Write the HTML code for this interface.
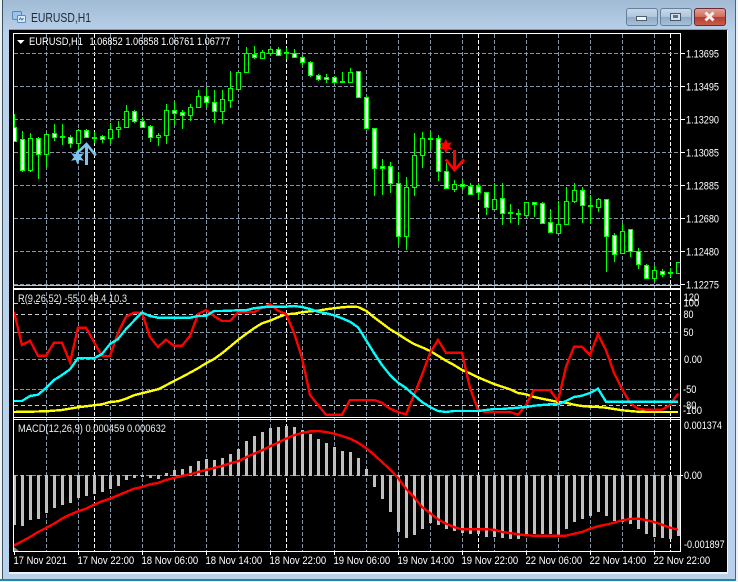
<!DOCTYPE html>
<html><head><meta charset="utf-8"><title>EURUSD,H1</title>
<style>
html,body{margin:0;padding:0;background:#e9eef3;width:738px;height:582px;overflow:hidden}
svg{display:block}
text{font-family:"Liberation Sans",Arial,sans-serif;font-size:11px;fill:#fff}
.c{shape-rendering:crispEdges}
</style></head><body>
<svg width="738" height="582" viewBox="0 0 738 582" xmlns="http://www.w3.org/2000/svg">
<defs>
<linearGradient id="tb" x1="0" y1="0" x2="0" y2="1"><stop offset="0" stop-color="#a2bbd5"/><stop offset=".06" stop-color="#bad2ea"/><stop offset="1" stop-color="#b9d1ea"/></linearGradient>
<linearGradient id="bt" x1="0" y1="0" x2="0" y2="1"><stop offset="0" stop-color="#c9d9e9"/><stop offset=".48" stop-color="#b1c7dd"/><stop offset=".52" stop-color="#8fabc7"/><stop offset="1" stop-color="#a9c2da"/></linearGradient>
<linearGradient id="cl" x1="0" y1="0" x2="0" y2="1"><stop offset="0" stop-color="#e2a294"/><stop offset=".48" stop-color="#cf6f60"/><stop offset=".52" stop-color="#b43c2e"/><stop offset="1" stop-color="#c7604e"/></linearGradient>
<clipPath id="cm"><rect x="14" y="34" width="666" height="252"/></clipPath>
<clipPath id="cr"><rect x="14" y="290" width="666" height="127"/></clipPath>
<clipPath id="cd"><rect x="14" y="420" width="667" height="131"/></clipPath>
</defs>
<!-- window frame -->
<rect x="0" y="0" width="738" height="582" fill="#eef2f6"/>
<rect x="3" y="0" width="732" height="580" fill="url(#tb)"/>
<rect x="2" y="0" width="1" height="580" fill="#39505e"/>
<rect x="735" y="0" width="1" height="580" fill="#3f6b7c"/>
<rect x="0" y="579" width="736" height="2" fill="#1f8ba3"/>
<!-- title -->
<g>
<rect x="12.5" y="11.5" width="9" height="8" rx="1" fill="#9cc4ea" stroke="#5c86b4"/>
<rect x="17.5" y="15.5" width="8" height="7" rx="1" fill="#dcebf9" stroke="#5a8cc0"/>
<path d="M19 20l1.5-2 1.5 2 1.5-2" fill="none" stroke="#3a6ea8"/>
</g>
<text x="31" y="22" textLength="60" lengthAdjust="spacingAndGlyphs" style="font-size:12.5px;fill:#1f2a33">EURUSD,H1</text>
<!-- buttons -->
<rect x="626.5" y="8.5" width="31" height="17" rx="2.5" fill="url(#bt)" stroke="#66809b"/>
<rect x="636.5" y="16.5" width="10" height="4" fill="#f1f5f8" stroke="#4c5e70"/>
<rect x="660.5" y="8.5" width="31" height="17" rx="2.5" fill="url(#bt)" stroke="#66809b"/>
<rect x="670.5" y="13.5" width="10" height="7" fill="#d5e2ee" stroke="#46586a"/>
<rect x="673" y="15" width="5" height="3" fill="#5c7086"/>
<rect x="694.5" y="8.5" width="31" height="17" rx="2.5" fill="url(#cl)" stroke="#6a2b38"/>
<path d="M705.500 12.500l8 8M713.500 12.500l-8 8" fill="none" stroke="#f4efec" stroke-width="3"/>
<!-- client -->
<rect x="9" y="29" width="719" height="1" fill="#8a98a4"/>
<rect x="9" y="30" width="718" height="542" fill="#000"/>
<rect x="727" y="30" width="1" height="544" fill="#f2f6fa"/>
<rect x="9" y="572" width="719" height="2" fill="#eef2f6"/>
<!-- vertical grid -->
<path class="c" d="M46.500 34V551M78.500 34V551M110.500 34V551M142.500 34V551M174.500 34V551M206.500 34V551M238.500 34V551M270.500 34V551M302.500 34V551M334.500 34V551M366.500 34V551M398.500 34V551M430.500 34V551M462.500 34V551M494.500 34V551M526.500 34V551M558.500 34V551M590.500 34V551M622.500 34V551M654.500 34V551" stroke="#8494a4" stroke-dasharray="4 2" fill="none"/>
<path class="c" d="M94.500 34V551M286.500 34V551M478.500 34V551M670.500 34V551" stroke="#fff" stroke-dasharray="4 2" fill="none"/>
<!-- horizontal grid -->
<path class="c" d="M14 53.500H680M14 86.500H680M14 119.500H680M14 152.500H680M14 185.500H680M14 218.500H680M14 251.500H680M14 284.500H680M14 332.500H680M14 359.500H680M14 389.500H680M14 475.500H680" stroke="#8494a4" stroke-dasharray="4 2" fill="none"/>
<path class="c" d="M14 303.500H680M14 314.500H680M14 405.500H680" stroke="#c8cdd2" stroke-dasharray="4 3" fill="none"/>
<!-- candles -->
<g clip-path="url(#cm)" class="c">
<path stroke="#0f0" fill="none" d="M14.500 114V142M22.500 131V172M30.500 133V172M38.500 137V179M46.500 133V168M54.500 124V141M62.500 124V145M70.500 135V148M78.500 129V150M86.500 129V137M94.500 132V143M102.500 135V143M110.500 123V143M118.500 121V138M126.500 105V128M134.500 110V123M142.500 117V127M150.500 125V142M158.500 133V146M166.500 104V144M174.500 101V126M182.500 110V129M190.500 104V121M198.500 90V107M206.500 87V107M214.500 90V123M222.500 90V124M230.500 71V108M238.500 71V90M246.500 47V73M254.500 46V59M262.500 50V58M270.500 47V55M278.500 47V56M286.500 48V59M294.500 49V58M302.500 55V65M310.500 61V77M318.500 74V81M326.500 74V83M334.500 76V83M342.500 72V83M350.500 68V83M358.500 71V97M366.500 96V128M374.500 128V196M382.500 159V195M390.500 162V193M398.500 172V246M406.500 177V250M414.500 133V196M422.500 132V168M430.500 131V149M438.500 135V181M446.500 163V189M454.500 180V192M462.500 180V190M470.500 183V195M478.500 183V200M486.500 192V215M494.500 183V210M502.500 183V225M510.500 204V223M518.500 209V225M526.500 202V217M534.500 202V217M542.500 202V224M550.500 209V233M558.500 201V233M566.500 187V225M574.500 183V203M582.500 187V223M590.500 195V224M598.500 198V212M606.500 199V272M614.500 233V262M622.500 223V254M630.500 229V257M638.500 248V269M646.500 264V279M654.500 266V282M662.500 269V277M670.500 268V277M678.500 262V274"/>
<path stroke="#0f0" fill="#fff" d="M12.500 127.500h4V141.500h-4zM20.500 139.500h4V170.500h-4zM36.500 138.500h4V154.500h-4zM52.500 133.500h4V137.500h-4zM60.500 136.500h4V137.500h-4zM68.500 137.500h4V143.500h-4zM84.500 130.500h4V137.500h-4zM92.500 137.500h4V138.500h-4zM100.500 136.500h4V139.500h-4zM132.500 111.500h4V121.500h-4zM140.500 121.500h4V127.500h-4zM148.500 126.500h4V137.500h-4zM172.500 110.500h4V113.500h-4zM180.500 112.500h4V115.500h-4zM204.500 96.500h4V102.500h-4zM212.500 102.500h4V111.500h-4zM252.500 54.500h4V57.500h-4zM276.500 49.500h4V55.500h-4zM284.500 52.500h4V53.500h-4zM292.500 53.500h4V57.500h-4zM300.500 57.500h4V62.500h-4zM308.500 62.500h4V75.500h-4zM316.500 75.500h4V79.500h-4zM324.500 77.500h4V79.500h-4zM332.500 77.500h4V82.500h-4zM340.500 81.500h4V82.500h-4zM356.500 71.500h4V97.500h-4zM364.500 97.500h4V128.500h-4zM372.500 128.500h4V168.500h-4zM380.500 166.500h4V168.500h-4zM388.500 166.500h4V183.500h-4zM396.500 183.500h4V236.500h-4zM428.500 138.500h4V139.500h-4zM436.500 138.500h4V171.500h-4zM444.500 171.500h4V188.500h-4zM460.500 184.500h4V186.500h-4zM468.500 186.500h4V194.500h-4zM476.500 186.500h4V192.500h-4zM484.500 192.500h4V207.500h-4zM500.500 198.500h4V213.500h-4zM508.500 212.500h4V213.500h-4zM516.500 213.500h4V214.500h-4zM532.500 202.500h4V204.500h-4zM540.500 203.500h4V223.500h-4zM548.500 222.500h4V232.500h-4zM580.500 190.500h4V205.500h-4zM588.500 205.500h4V206.500h-4zM604.500 199.500h4V236.500h-4zM612.500 235.500h4V254.500h-4zM628.500 229.500h4V251.500h-4zM636.500 251.500h4V264.500h-4zM644.500 265.500h4V278.500h-4zM660.500 271.500h4V274.500h-4zM668.500 272.500h4V273.500h-4z"/>
<path stroke="#0f0" fill="#000" d="M28.500 138.500h4V170.500h-4zM44.500 134.500h4V154.500h-4zM76.500 130.500h4V143.500h-4zM108.500 129.500h4V138.500h-4zM116.500 127.500h4V129.500h-4zM124.500 111.500h4V127.500h-4zM156.500 135.500h4V137.500h-4zM164.500 110.500h4V135.500h-4zM188.500 107.500h4V115.500h-4zM196.500 96.500h4V107.500h-4zM220.500 99.500h4V111.500h-4zM228.500 88.500h4V100.500h-4zM236.500 72.500h4V89.500h-4zM244.500 53.500h4V72.500h-4zM260.500 52.500h4V58.500h-4zM268.500 49.500h4V53.500h-4zM348.500 72.500h4V82.500h-4zM404.500 187.500h4V236.500h-4zM412.500 155.500h4V187.500h-4zM420.500 138.500h4V155.500h-4zM452.500 184.500h4V189.500h-4zM492.500 199.500h4V209.500h-4zM524.500 202.500h4V215.500h-4zM556.500 224.500h4V233.500h-4zM564.500 201.500h4V224.500h-4zM572.500 190.500h4V201.500h-4zM596.500 199.500h4V207.500h-4zM620.500 231.500h4V253.500h-4zM652.500 270.500h4V278.500h-4zM676.500 262.500h4V273.500h-4z"/>
</g>
<!-- markers -->
<g fill="#7fc2ee" stroke="none">
<polygon transform="translate(77.500 157)" points="0,-7.500 1.800,-3 6.500,-3.750 3.500,0 6.500,3.750 1.800,3 0,7.500 -1.800,3 -6.500,3.750 -3.500,0 -6.500,-3.750 -1.800,-3"/>
<path d="M85 146h3v19h-3z"/>
<path d="M76.500 153.500L86.500 144L95.800 155.500" fill="none" stroke="#7fc2ee" stroke-width="2.600"/>
</g>
<g fill="#f00">
<polygon transform="translate(445.800 146)" points="0,-7.500 1.800,-3 6.500,-3.750 3.500,0 6.500,3.750 1.800,3 0,7.500 -1.800,3 -6.500,3.750 -3.500,0 -6.500,-3.750 -1.800,-3"/>
<path d="M453 150h3v19h-3z"/>
<path d="M445.700 159.500L454.500 170L464 159.500" fill="none" stroke="#f00" stroke-width="2.800"/>
</g>
<!-- oscillator -->
<g clip-path="url(#cr)" class="c" fill="none" stroke-width="2.400">
<polyline stroke="#ff0" points="14,412 46,411.300 62,410 78,407.300 94,405.300 102,404.300 110,402 118,401.300 126,398.700 134,395.300 142,393.300 150,391.300 158,389.300 166,385.300 174,381 182,377 190,372.700 198,368.300 206,363.300 214,359 222,353.300 230,346.700 238,340 246,334 254,328.300 262,323.300 270,320.700 278,317.300 286,314.300 294,313.700 302,312.300 310,311.300 318,310.700 326,309.300 334,308.300 342,307.300 350,306.700 358,307 366,310.700 374,317.300 382,323.300 390,329.300 398,334 406,339.300 414,344 422,347.300 430,351 438,355.700 446,360.700 454,365 462,370 470,373.300 478,377.300 486,380.700 494,384 502,386.700 510,389.300 518,393 526,394.300 534,397 542,398.700 550,400.300 558,402 566,402.700 574,404.700 582,406 590,406.700 598,407 606,407.700 614,409 622,410.300 630,411 638,411.700 646,412 678,412"/>
<polyline stroke="#f00" points="14,311.700 22,345 30,340.700 38,355.700 46,355.700 54,342.700 62,342.700 70,362.300 78,327.700 86,327.700 94,342 102,356 110,356 118,333 126,316.700 134,312.700 142,312.700 150,337 158,347 166,339.700 174,345.700 182,345.700 190,336 198,314 206,310 214,316 222,321 230,321 238,312.300 246,311.700 254,312 262,308 270,304 278,310.700 286,314 294,332.700 302,358 310,395 318,405 326,414.700 342,414.700 350,400 374,400 382,402.700 390,408.700 398,412 406,414.300 414,395 422,375 430,353 438,340 446,352.700 462,352.700 470,388 478,410 486,412 510,412 518,414.700 526,405 534,390 550,390 558,401 566,366.700 574,346.700 582,346.700 590,355 598,334.300 606,350 614,373 622,389 630,402.700 638,408.700 646,409.700 654,410 662,409.700 670,405 678,393.700"/>
<polyline stroke="#0ff" points="14,401 22,401 30,396 38,394.700 46,388 54,380 62,375 70,369.300 78,358 86,358 94,358.300 102,354 110,344 118,339 126,329 134,320.700 142,312.700 150,316 158,317.700 190,317.700 198,316 206,316 214,311 222,311 238,310.300 246,310.300 254,308.300 262,307.300 270,306.700 286,306.700 294,306 302,307 310,309 318,311.700 326,313.300 334,315.300 342,318.300 350,321.700 358,327.300 366,340 374,353 382,365 390,375 398,382.700 406,388 414,395 422,402 430,407 438,411 446,412 454,411 478,411 486,410 494,409 502,409 510,408.300 518,407.700 526,407 534,405.700 542,405 550,404.300 558,404.300 566,401 574,397 582,395.700 590,393 598,388.700 606,401.700 678,401.700"/>
</g>
<!-- MACD -->
<g clip-path="url(#cd)" class="c">
<path stroke="#c0c0c0" stroke-width="3" fill="none" d="M14.500 475V525M22.500 475V526M30.500 475V520M38.500 475V519M46.500 475V513M54.500 475V508M62.500 475V505M70.500 475V503M78.500 475V498M86.500 475V496M94.500 475V494M102.500 475V492M110.500 475V489M118.500 475V486M126.500 475V480M134.500 475V478M142.500 475V477M150.500 475V478M158.500 475V479M166.500 476V473M174.500 476V470M182.500 476V469M190.500 476V466M198.500 476V461M206.500 476V459M214.500 476V460M222.500 476V458M230.500 476V454M238.500 476V449M246.500 476V441M254.500 476V436M262.500 476V432M270.500 476V428M278.500 476V427M286.500 476V426M294.500 476V427M302.500 476V430M310.500 476V434M318.500 476V439M326.500 476V443M334.500 476V447M342.500 476V451M350.500 476V452M358.500 476V458M366.500 476V469M374.500 475V487M382.500 475V499M390.500 475V512M398.500 475V532M406.500 475V538M414.500 475V535M422.500 475V529M430.500 475V523M438.500 475V525M446.500 475V529M454.500 475V531M462.500 475V533M470.500 475V534M478.500 475V534M486.500 475V537M494.500 475V537M502.500 475V538M510.500 475V539M518.500 475V539M526.500 475V536M534.500 475V534M542.500 475V534M550.500 475V534M558.500 475V536M566.500 475V529M574.500 475V522M582.500 475V519M590.500 475V516M598.500 475V512M606.500 475V516M614.500 475V521M622.500 475V522M630.500 475V524M638.500 475V529M646.500 475V534M654.500 475V537M662.500 475V538M670.500 475V539M678.500 475V536"/>
<polyline fill="none" stroke="#f00" stroke-width="2.400" points="14,545.300 22,541.300 30,537 38,532 46,528 54,523.700 62,518.700 70,514.700 78,511.300 86,508.700 94,504.700 102,501.300 110,498.700 118,495.300 126,492 134,488.700 142,487 150,484.300 158,483 166,480 174,478 182,476 190,474.300 198,472 206,470 214,468 222,466 230,463.300 238,461.300 246,457.300 254,453.700 262,450.300 270,446.300 278,442.700 286,438.700 294,435.300 302,433 310,431.300 318,431 326,432 334,433.700 342,436 350,438.700 358,442.700 366,448 374,454.700 382,462 390,469.300 398,478 406,488.700 414,497 422,507 430,513 438,519.300 446,523.700 454,527 462,529.300 486,529.300 494,529.700 502,532 510,533 518,534.300 526,535.300 534,535.700 566,535.700 574,533.700 582,532 590,528.700 598,526.300 606,524.700 614,522.700 622,520.300 630,519 638,518.700 646,520 654,522 662,524.700 670,527.700 678,529.700"/>
</g>
<polygon points="14,547 14,551 19,551" fill="#8a8a8a"/>
<!-- panel borders -->
<g class="c" fill="#fff">
<rect x="13" y="33" width="668" height="1"/>
<rect x="13" y="33" width="1" height="519"/>
<rect x="680" y="33" width="1" height="519"/>
<rect x="13" y="285" width="668" height="1" fill="#bfc6cc"/>
<rect x="13" y="288" width="668" height="2"/>
<rect x="13" y="417" width="668" height="1"/>
<rect x="13" y="419" width="668" height="1"/>
<rect x="13" y="551" width="668" height="1"/>
</g>
<!-- ticks -->
<path class="c" stroke="#fff" fill="none" d="M681 53.500h4M681 86.500h4M681 119.500h4M681 152.500h4M681 185.500h4M681 218.500h4M681 251.500h4M681 284.500h4M681 475.500h2M14.500 552v3M78.500 552v3M142.500 552v3M206.500 552v3M270.500 552v3M334.500 552v3M398.500 552v3M462.500 552v3M526.500 552v3M590.500 552v3M654.500 552v3"/>
<!-- labels -->
<polygon points="17,40 24.500,40 20.750,44" fill="#fff"/>
<text x="29" y="45" textLength="54" lengthAdjust="spacingAndGlyphs">EURUSD,H1</text>
<text x="89.500" y="45" textLength="140.700" lengthAdjust="spacingAndGlyphs">1.06852 1.06858 1.06761 1.06777</text>
<text x="18" y="302" textLength="109" lengthAdjust="spacingAndGlyphs" style="fill:#e2e8ec">R(9,26,52) -55.0 49.4 10.3</text>
<text x="18" y="432" textLength="148" lengthAdjust="spacingAndGlyphs" style="fill:#e8eef2">MACD(12,26,9) 0.000459 0.000632</text>
<text x="686" y="57.500" textLength="33" lengthAdjust="spacingAndGlyphs">1.13695</text>
<text x="686" y="90.500" textLength="33" lengthAdjust="spacingAndGlyphs">1.13495</text>
<text x="686" y="123.500" textLength="33" lengthAdjust="spacingAndGlyphs">1.13290</text>
<text x="686" y="156.500" textLength="33" lengthAdjust="spacingAndGlyphs">1.13085</text>
<text x="686" y="189.500" textLength="33" lengthAdjust="spacingAndGlyphs">1.12885</text>
<text x="686" y="222.500" textLength="33" lengthAdjust="spacingAndGlyphs">1.12680</text>
<text x="686" y="255.500" textLength="33" lengthAdjust="spacingAndGlyphs">1.12480</text>
<text x="686" y="288.500" textLength="33" lengthAdjust="spacingAndGlyphs">1.12275</text>
<text x="683.500" y="301" textLength="15.700" lengthAdjust="spacingAndGlyphs">120</text>
<text x="683.500" y="306.500" textLength="15.700" lengthAdjust="spacingAndGlyphs">100</text>
<text x="683.500" y="318" textLength="10" lengthAdjust="spacingAndGlyphs">80</text>
<text x="683.500" y="336" textLength="10" lengthAdjust="spacingAndGlyphs">50</text>
<text x="684" y="363" textLength="18" lengthAdjust="spacingAndGlyphs">0.00</text>
<text x="683" y="393" textLength="13.500" lengthAdjust="spacingAndGlyphs">-50</text>
<text x="683" y="409" textLength="13.500" lengthAdjust="spacingAndGlyphs">-80</text>
<text x="683" y="414" textLength="19" lengthAdjust="spacingAndGlyphs">-100</text>
<text x="684" y="429" textLength="38" lengthAdjust="spacingAndGlyphs">0.001374</text>
<text x="684" y="479" textLength="18" lengthAdjust="spacingAndGlyphs">0.00</text>
<text x="684" y="548" textLength="40.700" lengthAdjust="spacingAndGlyphs">-0.001897</text>
<text x="13.500" y="564" textLength="53.300" lengthAdjust="spacingAndGlyphs">17 Nov 2021</text>
<text x="77.500" y="564" textLength="56.700" lengthAdjust="spacingAndGlyphs">17 Nov 22:00</text>
<text x="141.500" y="564" textLength="56.700" lengthAdjust="spacingAndGlyphs">18 Nov 06:00</text>
<text x="205.500" y="564" textLength="56.700" lengthAdjust="spacingAndGlyphs">18 Nov 14:00</text>
<text x="269.500" y="564" textLength="56.700" lengthAdjust="spacingAndGlyphs">18 Nov 22:00</text>
<text x="333.500" y="564" textLength="56.700" lengthAdjust="spacingAndGlyphs">19 Nov 06:00</text>
<text x="397.500" y="564" textLength="56.700" lengthAdjust="spacingAndGlyphs">19 Nov 14:00</text>
<text x="461.500" y="564" textLength="56.700" lengthAdjust="spacingAndGlyphs">19 Nov 22:00</text>
<text x="525.500" y="564" textLength="56.700" lengthAdjust="spacingAndGlyphs">22 Nov 06:00</text>
<text x="589.500" y="564" textLength="56.700" lengthAdjust="spacingAndGlyphs">22 Nov 14:00</text>
<text x="653.500" y="564" textLength="56.700" lengthAdjust="spacingAndGlyphs">22 Nov 22:00</text>
</svg>
</body></html>
